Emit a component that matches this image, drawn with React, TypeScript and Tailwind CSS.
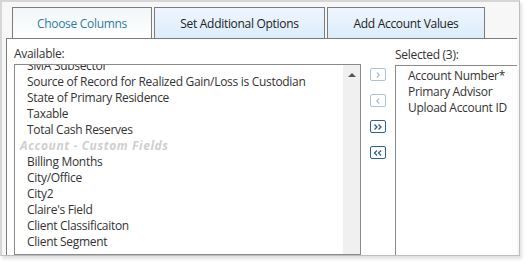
import React from "react";

const available = [
  "SMA Subsector",
  "Source of Record for Realized Gain/Loss is Custodian",
  "State of Primary Residence",
  "Taxable",
  "Total Cash Reserves",
  "__Account - Custom Fields",
  "Billing Months",
  "City/Office",
  "City2",
  "Claire's Field",
  "Client Classificaiton",
  "Client Segment",
];

const selected = ["Account Number*", "Primary Advisor", "Upload Account ID"];

function Chevrons({ dir, count }: { dir: "r" | "l"; count: 1 | 2 }) {
  const pts = (x: number) =>
    dir === "r" ? `${x},2.5 ${x + 2.5},5 ${x},7.5` : `${x + 2.5},2.5 ${x},5 ${x + 2.5},7.5`;
  return (
    <svg width="14" height="10" viewBox="0 0 14 10" fill="none" stroke="currentColor" strokeWidth="1.3">
      {count === 1 ? (
        <polyline points={pts(5.8)} />
      ) : (
        <>
          <polyline points={pts(3.5)} />
          <polyline points={pts(7.5)} />
        </>
      )}
    </svg>
  );
}

function MoveBtn({ dir, count, enabled }: { dir: "r" | "l"; count: 1 | 2; enabled: boolean }) {
  return (
    <div
      className={
        enabled
          ? "w-[16px] h-[13px] rounded-[2px] border border-[#2f5f8f] bg-white text-[#2f5f8f] flex items-center justify-center"
          : "w-[16px] h-[13px] rounded-[2px] border border-[#a9c1d9] bg-white text-[#a9c1d9] flex items-center justify-center"
      }
    >
      <Chevrons dir={dir} count={count} />
    </div>
  );
}

export default function App() {
  return (
    <div
      className="w-[529px] h-[265px] bg-white relative tracking-[-0.3px]"
      style={{ fontFamily: '"Open Sans", "Noto Sans", sans-serif' }}
    >
      <div className="w-[520px] h-[256px] bg-[#f7f7f7] border-t-2 border-l-2 border-r border-b border-t-[#d6d6d6] border-l-[#d6d6d6] border-r-[#bdbdbd] border-b-[#bdbdbd] shadow-[2px_3px_3px_rgba(0,0,0,0.12)] flex flex-col overflow-hidden">
        {/* tabs */}
        <div className="flex items-end pl-[10px] pt-[4px] h-[36px] shrink-0">
          <div className="w-[140px] h-[31px] border border-b-0 border-[#7c7c7c] bg-gradient-to-b from-[#f1f6f8] to-[#ffffff] flex items-center justify-center text-[12px] text-[#2b7ba6] pt-[1px]">
            Choose Columns
          </div>
          <div className="ml-[2px] w-[171px] h-[31px] border border-b-0 border-[#7c7c7c] bg-gradient-to-b from-[#eef6fe] to-[#dcecfb] flex items-center justify-center text-[12px] text-[#222] pt-[1px]">
            Set Additional Options
          </div>
          <div className="ml-[2px] w-[158px] h-[31px] border border-b-0 border-[#7c7c7c] bg-gradient-to-b from-[#eef6fe] to-[#dcecfb] flex items-center justify-center text-[12px] text-[#222] pt-[1px]">
            Add Account Values
          </div>
        </div>
        {/* content */}
        <div className="ml-[4px] mr-[2px] flex-1 bg-white border-t border-l border-[#7c7c7c] flex overflow-hidden pl-[7px] text-[12px] text-[#333]">
          <div className="flex flex-col w-[347px] shrink-0">
            <div className="h-[26px] pt-[7px] leading-[16px]">Available:</div>
            <div className="flex border border-[#8a8a8a] h-[200px]">
              <div className="flex-1 overflow-hidden">
                <div className="pl-[12px] mt-[-7px] leading-[16px]">
                  {available.map((a) =>
                    a.startsWith("__") ? (
                      <div
                        key={a}
                        className="-ml-[7px] italic font-bold text-[#cfcfcf] whitespace-nowrap tracking-[0.6px]"
                      >
                        {a.slice(2)}
                      </div>
                    ) : (
                      <div key={a} className="whitespace-nowrap">
                        {a}
                      </div>
                    )
                  )}
                </div>
              </div>
              <div className="w-[17px] bg-[#f0f0f0] flex justify-center pt-[8px]">
                <div className="w-0 h-0 border-l-[4px] border-r-[4px] border-b-[4px] border-l-transparent border-r-transparent border-b-[#555]" />
              </div>
            </div>
          </div>
          <div className="w-[34px] shrink-0 flex flex-col items-center pt-[29px] gap-[13px]">
            <MoveBtn dir="r" count={1} enabled={false} />
            <MoveBtn dir="l" count={1} enabled={false} />
            <MoveBtn dir="r" count={2} enabled={true} />
            <MoveBtn dir="l" count={2} enabled={true} />
          </div>
          <div className="flex flex-col flex-1">
            <div className="h-[27px] pt-[8px] leading-[16px]">Selected (3):</div>
            <div className="border-t border-l border-[#8a8a8a] h-[200px] pl-[12px] pt-[2px] leading-[16px]">
              {selected.map((s) => (
                <div key={s} className="whitespace-nowrap">
                  {s}
                </div>
              ))}
            </div>
          </div>
        </div>
      </div>
    </div>
  );
}
